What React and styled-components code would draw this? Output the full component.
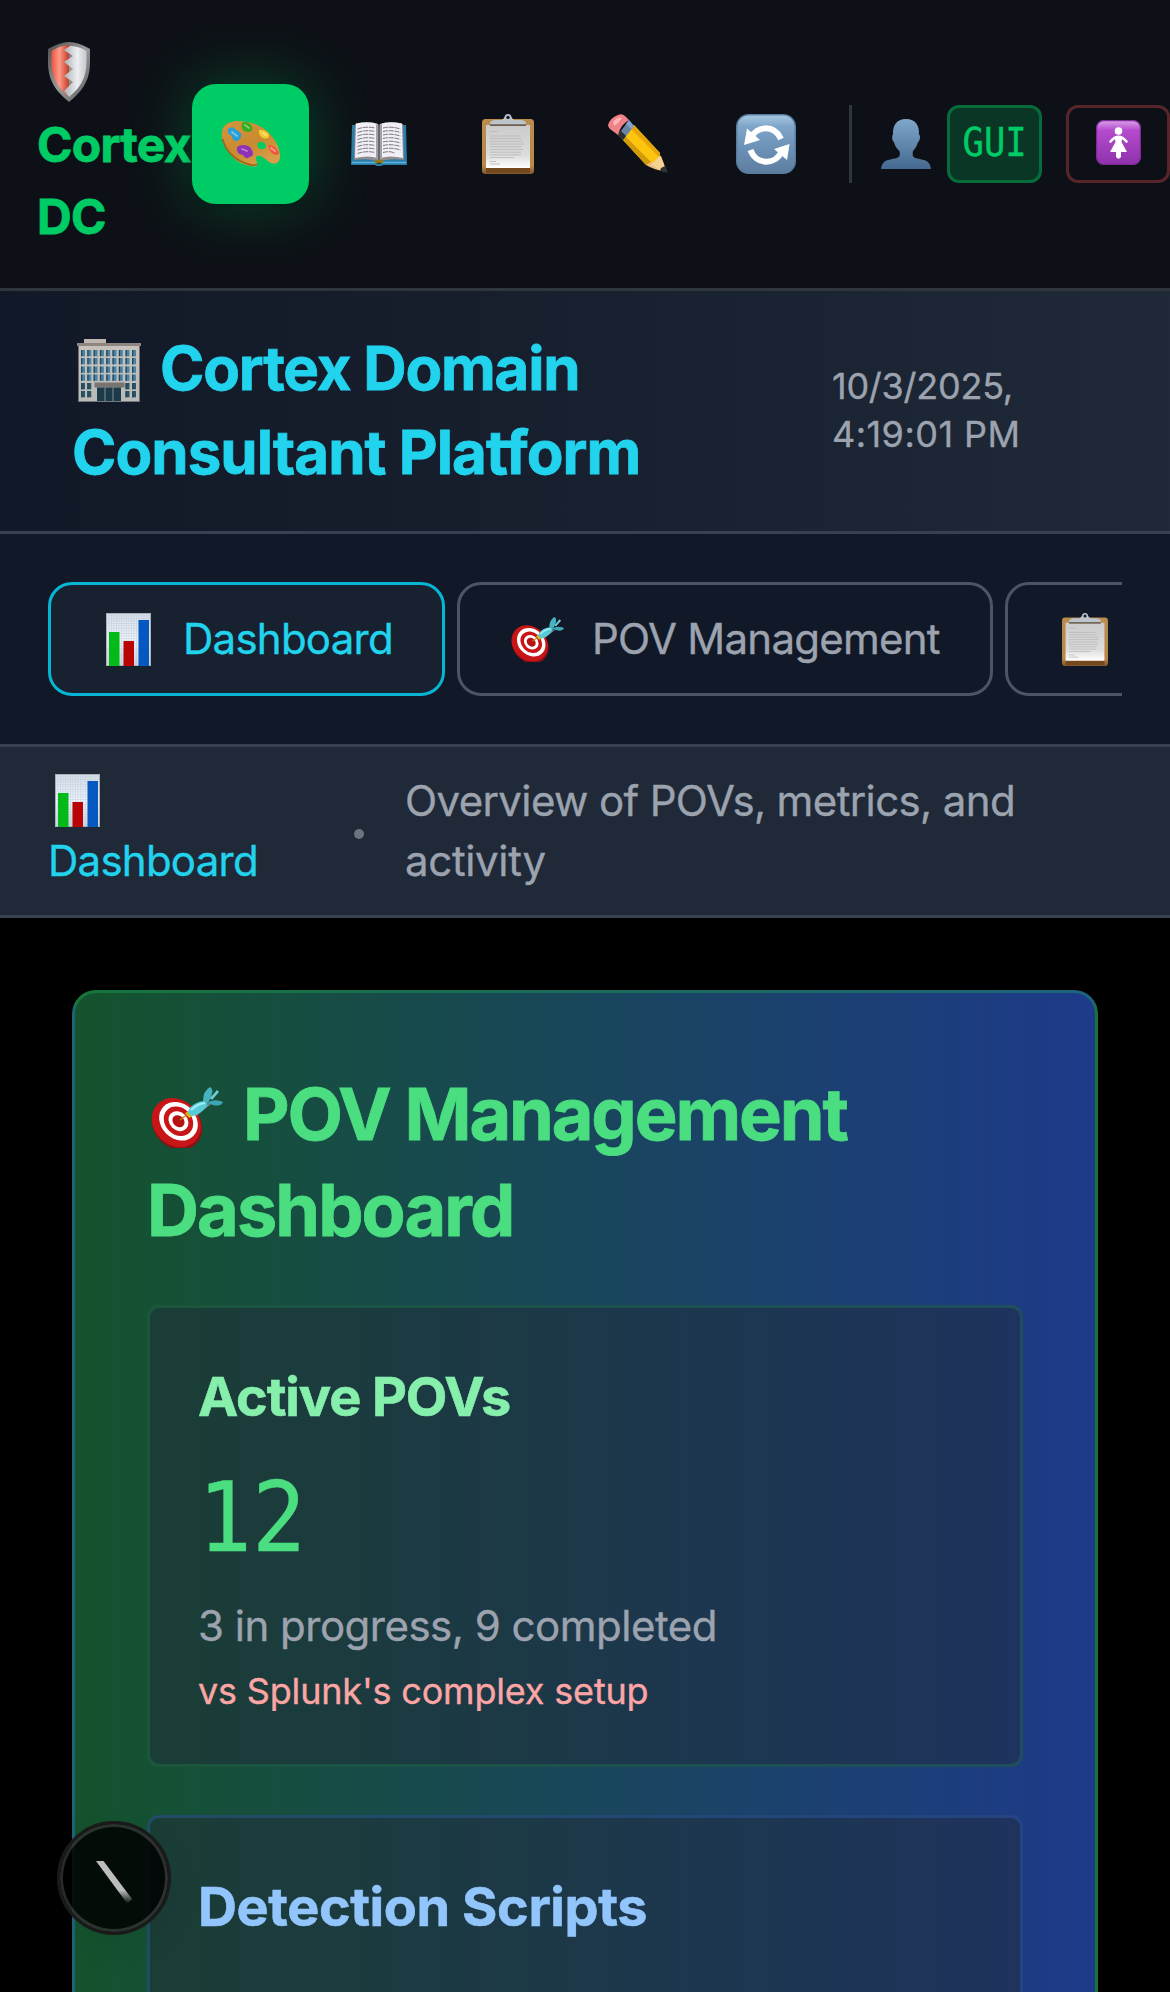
import React from "react";
import styled, { createGlobalStyle } from "styled-components";

const Global = createGlobalStyle`
  *, *::before, *::after { box-sizing: border-box; }
  html, body { margin: 0; background: #000; overflow: hidden; }
  body {
    font-family: Inter, "Liberation Sans", sans-serif;
    color: #fff;
    -webkit-text-stroke: 0.35px currentColor;
  }
  #root { height: 1992px; overflow: hidden; }
  h1, h2, h3, p { margin: 0; }
  button { font: inherit; background: none; border: 0; padding: 0; margin: 0; }
`;

const Page = styled.div`
  width: 1170px;
  height: 1992px;
  overflow: hidden;
  display: flex;
  flex-direction: column;
  background: #000;
`;

const Tracked = styled.span`
  letter-spacing: ${(p) => p.$by}px;
`;

const TopBar = styled.header`
  flex: none;
  height: 291px;
  padding: 36px 0 36px 36px;
  display: flex;
  align-items: center;
  background: #0d1117;
  border-bottom: 3px solid #30363d;
`;

const Brand = styled.div`
  flex: none;
  width: 156px;
  padding: 1px 0 0 1px;
  display: flex;
  flex-direction: column;
  font-size: 48px;
  line-height: 72px;
  font-weight: 700;
  letter-spacing: -0.7px;
  -webkit-text-stroke-width: 0.8px;
  color: #00cc66;
`;

const BrandMark = styled.div`
  height: 72px;
  padding: 5px 0 0 11px;
  line-height: 0;
`;

const Tools = styled.nav`
  flex: none;
  display: flex;
  gap: 12px;
`;

const Tool = styled.button`
  flex: none;
  width: 117px;
  height: 120px;
  padding-right: ${(p) => p.$nudge || 0}px;
  display: flex;
  align-items: center;
  justify-content: center;
  border-radius: 24px;
  background: ${(p) => (p.$active ? "#00cc66" : "transparent")};
  box-shadow: ${(p) =>
    p.$active ? "0 0 60px rgba(0, 204, 102, 0.3), 0 3px 9px rgba(0, 0, 0, 0.4)" : "none"};
`;

const Divider = styled.div`
  flex: none;
  width: 3px;
  height: 78px;
  margin: 0 29px 0 24px;
  background: #30363d;
`;

const Badge = styled.div`
  flex: none;
  width: 95px;
  height: 78px;
  margin: 0 24px 0 16px;
  display: flex;
  align-items: center;
  justify-content: center;
  border: 3px solid rgba(0, 204, 102, 0.36);
  border-radius: 12px;
  background: rgba(0, 204, 102, 0.2);
  color: #00cc66;
`;

const BadgeText = styled.span`
  font: 39.5px/48px "DejaVu Sans Mono", monospace;
  transform: scaleX(0.9);
  margin-top: -4px;
`;

const ExitButton = styled.button`
  flex: none;
  width: 104px;
  height: 78px;
  padding-bottom: 3px;
  display: flex;
  align-items: center;
  justify-content: center;
  border: 3px solid #57252a;
  border-radius: 12px;
`;

const Hero = styled.section`
  flex: none;
  height: 243px;
  padding: 35px 72px 37px;
  display: flex;
  align-items: center;
  justify-content: space-between;
  background: linear-gradient(to right, #111827, #1f2937);
  border-bottom: 3px solid #374151;
`;

const HeroTitle = styled.h1`
  width: 620px;
  font-size: 60px;
  line-height: 84px;
  font-weight: 700;
  -webkit-text-stroke-width: 0.8px;
  white-space: nowrap;
  color: #22d3ee;
  svg { vertical-align: -12px; margin: 0 19px 0 5px; }
`;

const Stamp = styled.div`
  width: 266px;
  font-size: 36px;
  line-height: 48px;
  color: #9ca3af;
`;

const TabBar = styled.nav`
  flex: none;
  height: 213px;
  padding: 48px;
  background: #111827;
  border-bottom: 3px solid #374151;
`;

const TabScroller = styled.div`
  display: flex;
  gap: 12px;
  overflow: hidden;
`;

const Tab = styled.button`
  flex: none;
  width: ${(p) => p.$width}px;
  height: 114px;
  padding: 0 48px 0 50px;
  display: flex;
  align-items: center;
  gap: 28px;
  border: 3px solid ${(p) => (p.$active ? "#06b6d4" : "#4b5563")};
  border-radius: 24px;
  background: ${(p) => (p.$active ? "rgba(31, 41, 55, 0.5)" : "transparent")};
  color: ${(p) => (p.$active ? "#22d3ee" : "#9ca3af")};
  font-size: 42px;
  line-height: 60px;
  letter-spacing: -0.75px;
  white-space: nowrap;
`;

const TabIcon = styled.span`
  flex: none;
  width: 54px;
  display: flex;
  justify-content: center;
`;

const Crumbs = styled.div`
  flex: none;
  height: 171px;
  padding: 24px 48px;
  display: flex;
  align-items: center;
  background: #1f2937;
  border-bottom: 3px solid #374151;
  font-size: 42px;
  line-height: 60px;
`;

const CrumbName = styled.div`
  width: 306px;
  letter-spacing: -0.75px;
  color: #22d3ee;
  svg { vertical-align: -11px; margin-left: 7px; }
`;

const CrumbDot = styled.div`
  width: 10px;
  height: 10px;
  margin: 6px 41px 0 0;
  border-radius: 50%;
  background: #6b7280;
`;

const CrumbText = styled.div`
  color: #9ca3af;
`;

const Main = styled.main`
  flex: none;
  padding: 72px;
`;

const Panel = styled.section`
  height: 1500px;
  padding: 72px;
  display: flex;
  flex-direction: column;
  gap: 48px;
  border: 3px solid rgba(34, 197, 94, 0.3);
  border-radius: 24px;
  background: linear-gradient(to right, #14532d, #1e3a8a);
`;

const PanelTitle = styled.h2`
  height: 192px;
  padding-top: 1px;
  font-size: 72px;
  line-height: 96px;
  font-weight: 700;
  -webkit-text-stroke-width: 0.8px;
  color: #4ade80;
  svg { vertical-align: -8px; margin: 0 20px 0 4px; }
`;

const Stat = styled.article`
  flex: none;
  height: 462px;
  padding: 47px 48px;
  border: 3px solid ${(p) => p.$border};
  border-radius: 12px;
  background: rgba(31, 41, 55, 0.5);
`;

const StatTitle = styled.h3`
  font-size: 54px;
  line-height: 84px;
  font-weight: 700;
  letter-spacing: ${(p) => p.$tracking}px;
  -webkit-text-stroke-width: 0.6px;
  color: ${(p) => p.$color};
`;

const StatValue = styled.div`
  margin: 25px 0 24px;
  font: 97px/108px "DejaVu Sans Mono", monospace;
  color: #4ade80;
  transform: scaleX(0.925);
  transform-origin: left;
`;

const StatDetail = styled.p`
  font-size: 42px;
  line-height: 60px;
  letter-spacing: -0.5px;
  color: #9ca3af;
`;

const StatNote = styled.p`
  margin-top: 11px;
  font-size: 36px;
  line-height: 48px;
  letter-spacing: -0.18px;
  color: #fca5a5;
`;

const DevBadge = styled.div`
  position: fixed;
  left: 57px;
  top: 1821px;
  width: 114px;
  height: 114px;
  padding-top: 10px;
  display: flex;
  align-items: center;
  justify-content: center;
  border-radius: 50%;
  background: rgba(0, 0, 0, 0.85);
  border: 3px solid #1a1a1a;
  box-shadow: inset 0 0 0 3px rgba(255, 255, 255, 0.16), 0 12px 36px rgba(0, 0, 0, 0.06);
`;

const ShieldIcon = () => (
  <svg width="42" height="60" viewBox="0 0 42 60">
    <defs>
      <linearGradient id="shRed"><stop offset="0" stopColor="#e8553f" /><stop offset=".45" stopColor="#ff9a88" /><stop offset="1" stopColor="#c23c28" /></linearGradient>
      <linearGradient id="shWhite"><stop offset="0" stopColor="#aeb2b6" /><stop offset=".6" stopColor="#eceef0" /><stop offset="1" stopColor="#c4c8cc" /></linearGradient>
      <linearGradient id="shRim" x2="1" y2="1"><stop offset="0" stopColor="#4c4c4c" /><stop offset=".5" stopColor="#9a9a9a" /><stop offset="1" stopColor="#5a5a5a" /></linearGradient>
    </defs>
    <path d="M0 7Q12 0 21 0Q30 0 42 7V20C42 40 33 50 21 60C9 50 0 40 0 20Z" fill="url(#shRim)" />
    <path d="M3.500 9Q13 3 21 3V55C10 46 3.500 36 3.500 20Z" fill="url(#shRed)" />
    <path d="M22 4Q30 4 38.500 9V20C38.500 36 32 46 21 55L16 49L25 40L16 34L25 27L16 20L25 14L16 8Z" fill="url(#shWhite)" />
  </svg>
);

const PaletteIcon = () => (
  <svg width="60" height="48" viewBox="0 0 60 48">
    <defs><linearGradient id="palWood" x2=".6" y2="1"><stop offset="0" stopColor="#d3963c" /><stop offset=".6" stopColor="#c98a30" /><stop offset="1" stopColor="#d89e49" /></linearGradient></defs>
    <path d="M2 8C6 0 20-1 34 4C50 10 60 26 59 38C58 44 53 45 48 42C43 38 40 35 36 36C33 38 37 42 36 45C35 48 28 46 22 44C8 38-3 20 2 8ZM41 22C38 21 35 24 37 27C39 30 44 30 45 27C45 24 43 22 41 22Z" fill="url(#palWood)" fillRule="evenodd" />
    <path d="M1.500 19C5 31 13 39 24 43C30 45.500 34 46 36 44" fill="none" stroke="#9c6519" strokeWidth="1.600" />
    <path d="M21 3Q26 0 30 5Q34 10 28 12Q19 12 21 3Z" fill="#35ac1e" />
    <path d="M7 9Q12 5 15 10Q23 13 19 19Q12 24 11 16Q6 14 7 9Z" fill="#289fda" />
    <path d="M38 10Q43 9 48 14Q49 20 42 18Q37 15 38 10Z" fill="#f3cb2f" />
    <path d="M16 27Q22 23 29 27Q35 35 29 37Q24 40 22 35Q15 34 16 27Z" fill="#8e32b8" />
    <path d="M47 25Q54 24 58 33Q56 37 51 33Q48 30 47 25Z" fill="#f0553f" />
    <path d="M24 5L28 8M11 12L16 16M42 13L45 15M21 29L26 31M50 28L54 31" stroke="#ffffff" strokeOpacity=".4" strokeWidth="1.800" strokeLinecap="round" />
  </svg>
);

const BookIcon = () => (
  <svg width="56" height="44" viewBox="0 0 56 44">
    <path d="M1 3H55L56 43H32Q28 46 24 43H0Z" fill="#2b7da8" />
    <path d="M1 40.500H55" stroke="#5db4dc" strokeWidth="1.500" />
    <path d="M4 2Q17-1 26 1.500L28 3L30 1.500Q39-1 52 2L53 38Q38 36 28 40Q18 36 3 38Z" fill="#8d8d92" />
    <path d="M5 1.500Q18-1 26.500 2V36Q17 33 4 36ZM51 1.500Q38-1 29.500 2V36Q39 33 52 36Z" fill="#f1eff5" />
    <path d="M25 2L28 4L31 2V37L28 39L25 37Z" fill="#a3a1a8" />
    <path d="M28 3V38" stroke="#55555b" strokeWidth="1.500" />
    <g stroke="#77757f" strokeWidth="1" strokeDasharray="5 .8" fill="none">
      {[6, 9.500, 13, 16.500, 20, 23.500, 27, 30.500].map((y) => (
        <path key={y} d={`M6.500 ${y + 1}Q15 ${y - 2} 24 ${y}M32 ${y}Q40 ${y - 2} ${y > 28 ? 44 : 49.500} ${y + 1}`} />
      ))}
    </g>
    <path d="M23 38.500Q28 36.500 33 38.500L31 42H25Z" fill="#8c7a20" />
    <path d="M25 42Q28 39 31 42" fill="#123f5a" />
  </svg>
);

const ClipboardIcon = ({ width = 52, height = 60 }) => (
  <svg width={width} height={height} viewBox="0 0 52 60">
    <defs>
      <linearGradient id="clipPaper" x2="0" y2="1"><stop offset="0" stopColor="#cbcbcb" /><stop offset=".7" stopColor="#dcdcdc" /><stop offset="1" stopColor="#ffffff" /></linearGradient>
      <linearGradient id="clipWood" x2="0" y2="1"><stop offset="0" stopColor="#ba8c4e" /><stop offset=".85" stopColor="#b98947" /><stop offset="1" stopColor="#80562a" /></linearGradient>
    </defs>
    <rect y="5" width="52" height="55" rx="3.500" fill="url(#clipWood)" />
    <rect x="4" y="54" width="44" height="5" fill="#74491f" />
    <rect x="4" y="11" width="44" height="43" fill="url(#clipPaper)" />
    <path d="M8 11V9Q9 6 14 6H20Q22 4.500 22.500 3Q23 0 26 0T29.500 3Q30 4.500 32 6H38Q43 6 44 9V11Z" fill="#bec4cc" />
    <path d="M8 11.200H44" stroke="#6c5f51" strokeWidth="1.800" />
    <circle cx="26" cy="3.400" r="1.700" fill="#171a20" />
    <g stroke="#b9b9b9" strokeWidth=".9">
      <path d="M8 17.500H15" />
      {[22, 24.700, 27.400, 30.100, 32.800, 35.500, 38.200, 40.900, 43.600].map((y, i) => (
        <path key={y} d={`M8 ${y}H${[38, 39, 41, 42, 40, 41, 39, 39, 32][i]}`} />
      ))}
      <path d="M8 47.500H14M8 50H18" />
    </g>
  </svg>
);

const PencilIcon = () => (
  <svg width="60" height="60" viewBox="0 0 60 60">
    <path d="M38 51L48 43L53 42L59 58Q46 56 38 51Z" fill="#e9bf7e" />
    <path d="M43 50L48 46L52 41L55 48L58 58L50 55Z" fill="#f6d293" />
    <path d="M53 54L57 52L59.500 59L52 56.500Z" fill="#2e3236" />
    <path d="M14 25L26 11L52 39Q52 44 48 44Q47 49 42 48L38 51Z" fill="#fdc50e" />
    <path d="M14 25L17 22L43 48L38 51Z" fill="#d19a0b" />
    <path d="M23 15L26 11L52 39L51 43Z" fill="#e5a50b" />
    <path d="M10 21L21 6L26 12L15 26Z" fill="#6783a6" />
    <path d="M10 21L13 17L18 22L15 26Z" fill="#2d2d30" />
    <path d="M18 10L21 6L26 12L23 15Z" fill="#85a3c8" />
    <path d="M0 11Q2 4 10 1Q14-1 17 2L21 6Q13 10 10 21L2 15Q0 13 0 11Z" fill="#ef8288" />
    <path d="M5 8Q10 2 14 4Q11 9 6 12Z" fill="#ffb3b7" />
  </svg>
);

const RefreshIcon = () => (
  <svg width="60" height="60" viewBox="0 0 60 60">
    <defs><linearGradient id="refTile" x2="0" y2="1"><stop offset="0" stopColor="#a9c9e4" /><stop offset=".2" stopColor="#7fa5c9" /><stop offset=".6" stopColor="#6b90b5" /><stop offset="1" stopColor="#5d7d9e" /></linearGradient></defs>
    <rect x=".7" y=".7" width="58.600" height="58.600" rx="12" fill="url(#refTile)" stroke="#587b9e" strokeWidth="1.400" />
    <path d="M15 24C20 12 38 10 45 25" fill="none" stroke="#fff" strokeWidth="6" />
    <path d="M11 14.500L24 26L8 31Z" fill="#fff" />
    <path d="M14.500 36C20 51 39 52 46 37" fill="none" stroke="#fff" strokeWidth="6" />
    <path d="M53.500 30L38 35L51 46Z" fill="#fff" />
  </svg>
);

const PersonIcon = () => (
  <svg width="52" height="52" viewBox="0 0 52 52">
    <defs><linearGradient id="person" x2="0" y2="1"><stop offset="0" stopColor="#7fa7ca" /><stop offset="1" stopColor="#456990" /></linearGradient></defs>
    <path d="M26 0C36 0 40 7 39.500 16C41.500 17 40.500 23 38.500 24C37.500 29 34 32 33 34V38C34 41 38 41 42 42C49 43 51 46 52 52H0C1 46 3 43 10 42C14 41 18 41 19.500 38V34C18 32 14.500 29 13.500 24C11.500 23 11 17 12.500 16C12 7 16 0 26 0Z" fill="url(#person)" />
  </svg>
);

const RestroomIcon = () => (
  <svg width="45" height="45" viewBox="0 0 45 45">
    <defs><linearGradient id="wc" x2="0" y2="1"><stop offset="0" stopColor="#dba0ea" /><stop offset=".22" stopColor="#b44bcd" /><stop offset="1" stopColor="#8f32ab" /></linearGradient></defs>
    <rect x=".6" y=".6" width="43.800" height="43.800" rx="7" fill="url(#wc)" stroke="#7d2b98" strokeWidth="1.200" />
    <circle cx="22.500" cy="11" r="3.800" fill="#fff" />
    <path d="M14.500 21.500Q22.500 12 30.500 21.500" fill="none" stroke="#fff" strokeWidth="2.600" strokeLinecap="round" />
    <path d="M18.500 17.500H26.500L25.500 22L31 32H25V37Q22.500 40.500 20 37V32H14L19.500 22Z" fill="#fff" />
  </svg>
);

const BuildingIcon = () => (
  <svg width="64" height="63" viewBox="0 0 64 63">
    <defs><linearGradient id="wall" x2="0" y2="1"><stop offset="0" stopColor="#c9c1bb" /><stop offset="1" stopColor="#b9bbb9" /></linearGradient></defs>
    <rect x="7" y="0" width="22" height="6" fill="#bfb6b0" />
    <rect x="1.500" y="6" width="61" height="57" fill="url(#wall)" />
    <path d="M0 4H64V7H0Z" fill="#8f8581" />
    {[11, 19, 27.500, 35.500, 44, 52].map((y, r) =>
      [4, 10.300, 16.600, 22.900, 29.200, 35.500, 41.800, 48.500, 55].map((x, c) =>
        r > 3 && c > 1 && c < 7 ? null : (
          <g key={`${r}-${c}`}>
            <rect x={x} y={y} width="4" height="6.300" fill={r > 3 ? "#2b5265" : "#4683a5"} />
            <rect x={x} y={y} width="1.300" height="6.300" fill="#24475a" />
          </g>
        )
      )
    )}
    <rect x="17.500" y="43.500" width="30" height="5" fill="#787472" />
    <rect x="20" y="48.500" width="24" height="14.500" fill="#1c3a47" />
    <path d="M28 48.500V63M36 48.500V63" stroke="#7f9299" strokeWidth="1" />
    <path d="M1.500 62.500H62.500" stroke="#74797b" />
  </svg>
);

const ChartIcon = () => (
  <svg width="45" height="53" viewBox="0 0 45 53">
    <defs>
      <linearGradient id="chBg" x2="0" y2="1"><stop offset="0" stopColor="#d7dee6" /><stop offset=".5" stopColor="#f1f5f9" /><stop offset="1" stopColor="#cdd6de" /></linearGradient>
      <pattern id="chGrid" width="2.500" height="2.500" patternUnits="userSpaceOnUse"><path d="M0 0H2.500M0 0V2.500" stroke="#b0c6dc" strokeWidth=".7" /></pattern>
    </defs>
    <rect width="45" height="53" fill="url(#chBg)" />
    <rect width="45" height="53" fill="url(#chGrid)" />
    <rect x=".5" y=".5" width="44" height="52" fill="none" stroke="#a9b0b7" />
    <rect x="3" y="19" width="10.500" height="34" fill="#04ba18" />
    <rect x="17.500" y="28" width="10.500" height="25" fill="#b80404" />
    <rect x="32.500" y="7" width="10.500" height="46" fill="#0558c0" />
  </svg>
);

const TargetIcon = ({ width, height }) => (
  <svg width={width} height={height} viewBox="0 0 72 61">
    <g transform="rotate(45 25 36)">
      <ellipse cx="27" cy="36.500" rx="27" ry="23" fill="#8f1013" />
      <ellipse cx="25" cy="35.500" rx="26.500" ry="22.500" fill="#c81518" />
      <ellipse cx="25.500" cy="33" rx="21" ry="17.500" fill="#fff" />
      <ellipse cx="25.500" cy="33" rx="16" ry="13.300" fill="#c81518" />
      <ellipse cx="25.500" cy="33" rx="10.800" ry="9" fill="#fff" />
      <ellipse cx="25.500" cy="33" rx="6.600" ry="5.500" fill="#b51215" />
    </g>
    <path d="M29 33L38 26" stroke="#b98a0a" strokeWidth="1.500" />
    <path d="M34 26L38 24L42 29L38 31Z" fill="#e2b313" />
    <path d="M44 29L59 17" stroke="#8b8f93" strokeWidth="1.500" fill="none" />
    <path d="M37 25C39 18 47 14 54 14L57 17C53 24 47 28 41 29Q38 28 37 25Z" fill="#55cbd8" />
    <path d="M40 23Q46 17 54 16" stroke="#a5edf2" strokeWidth="2" fill="none" />
    <path d="M52 14Q52 4 59 0Q63 2 60 10L57 16Z" fill="#48b2c0" />
    <path d="M59 11L66 3L68 5L61 13Z" fill="#6fcbd6" />
    <path d="M55 16Q64 11 72 15Q70 20 62 18Z" fill="#3fa4b4" />
  </svg>
);

const SlashMark = () => (
  <svg width="36" height="44" viewBox="0 0 36 44">
    <defs><linearGradient id="slash" x1="0" y1="0" x2="0" y2="1"><stop offset=".68" stopColor="#bdbdbd" /><stop offset="1" stopColor="#bdbdbd" stopOpacity="0" /></linearGradient></defs>
    <path d="M0 0H7.500L36 38L31.500 43Z" fill="url(#slash)" />
  </svg>
);

export default function App() {
  return (
    <Page>
      <Global />
      <TopBar>
        <Brand>
          <BrandMark><ShieldIcon /></BrandMark>
          <span>Cortex</span>
          <span>DC</span>
        </Brand>
        <Tools>
          <Tool $active><PaletteIcon /></Tool>
          <Tool $nudge={2}><BookIcon /></Tool>
          <Tool $nudge={2}><ClipboardIcon /></Tool>
          <Tool><PencilIcon /></Tool>
          <Tool $nudge={2}><RefreshIcon /></Tool>
        </Tools>
        <Divider />
        <PersonIcon />
        <Badge><BadgeText>GUI</BadgeText></Badge>
        <ExitButton><RestroomIcon /></ExitButton>
      </TopBar>

      <Hero>
        <HeroTitle>
          <BuildingIcon /><Tracked $by={-1.2}>Cortex Domain</Tracked><br />
          <Tracked $by={-0.95}>Consultant Platform</Tracked>
        </HeroTitle>
        <Stamp>
          <Tracked $by={-0.25}>10/3/2025,</Tracked><br />
          <Tracked $by={0.45}>4:19:01 PM</Tracked>
        </Stamp>
      </Hero>

      <TabBar>
        <TabScroller>
          <Tab $active $width={397}><TabIcon><ChartIcon /></TabIcon>Dashboard</Tab>
          <Tab $width={536}><TabIcon><TargetIcon width={53} height={45} /></TabIcon>POV Management</Tab>
          <Tab $width={400}><TabIcon><ClipboardIcon width={46} height={53} /></TabIcon></Tab>
        </TabScroller>
      </TabBar>

      <Crumbs>
        <CrumbName><ChartIcon /><br />Dashboard</CrumbName>
        <CrumbDot />
        <CrumbText>
          <Tracked $by={-0.62}>Overview of POVs, metrics, and</Tracked><br />
          <Tracked $by={-0.35}>activity</Tracked>
        </CrumbText>
      </Crumbs>

      <Main>
        <Panel>
          <PanelTitle>
            <TargetIcon width={72} height={61} /><Tracked $by={-2.15}>POV Management</Tracked><br />
            <Tracked $by={-1.95}>Dashboard</Tracked>
          </PanelTitle>
          <Stat $border="rgba(34, 197, 94, 0.2)">
            <StatTitle $color="#86efac" $tracking={-1.1}>Active POVs</StatTitle>
            <StatValue>12</StatValue>
            <StatDetail>3 in progress, 9 completed</StatDetail>
            <StatNote>vs Splunk's complex setup</StatNote>
          </Stat>
          <Stat $border="rgba(59, 130, 246, 0.24)">
            <StatTitle $color="#93c5fd" $tracking={-0.42}>Detection Scripts</StatTitle>
          </Stat>
        </Panel>
      </Main>
      <DevBadge><SlashMark /></DevBadge>
    </Page>
  );
}
